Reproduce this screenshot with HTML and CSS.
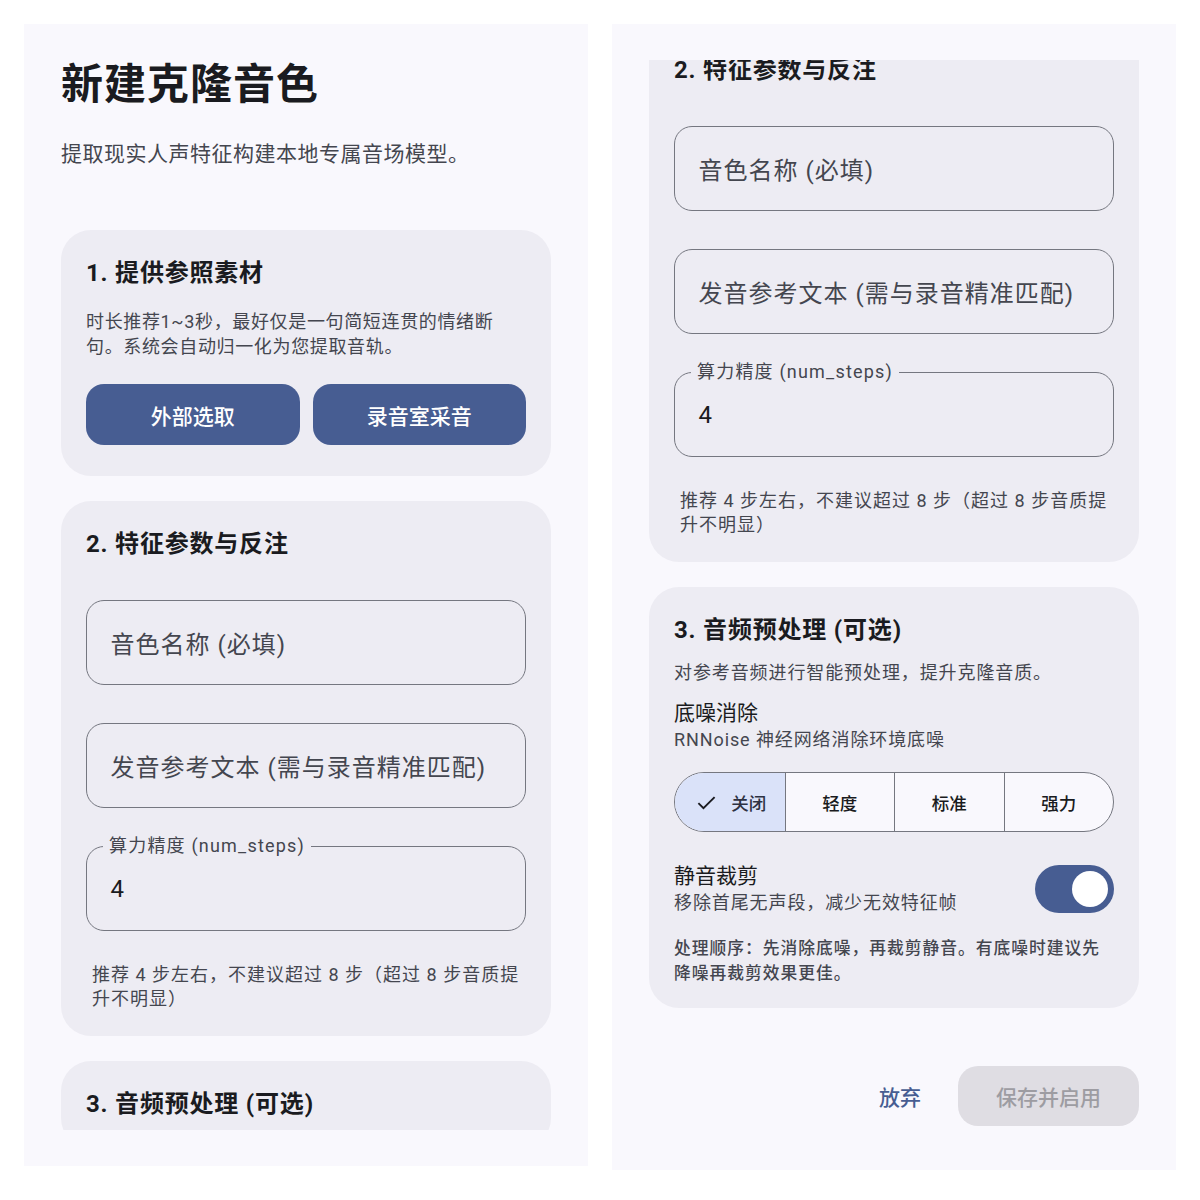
FILE: index.html
```html
<!DOCTYPE html>
<html lang="zh-CN">
<head>
<meta charset="utf-8">
<title>新建克隆音色</title>
<link rel="stylesheet" href="styles.css">
</head>
<body>
<div class="screens">
  <section class="panel panel-left">
    <div class="viewport viewport-left">
      <h1 class="headline">新建克隆音色</h1>
      <p class="subtitle">提取现实人声特征构建本地专属音场模型。</p>

      <div class="card card-source">
        <h2 class="card-title">1. 提供参照素材</h2>
        <p class="card-desc">时长推荐1~3秒，最好仅是一句简短连贯的情绪断句。系统会自动归一化为您提取音轨。</p>
        <div class="button-row">
          <button class="filled-btn">外部选取</button>
          <button class="filled-btn">录音室采音</button>
        </div>
      </div>

      <div class="card card-params">
        <h2 class="card-title">2. 特征参数与反注</h2>
        <div class="field field-first"><span class="placeholder">音色名称 (必填)</span></div>
        <div class="field"><span class="placeholder">发音参考文本 (需与录音精准匹配)</span></div>
        <div class="field field-labeled">
          <span class="float-label">算力精度 (num_steps)</span>
          <span class="value">4</span>
        </div>
        <p class="hint">推荐 4 步左右，不建议超过 8 步（超过 8 步音质提升不明显）</p>
      </div>

      <div class="card card-pre">
        <h2 class="card-title">3. 音频预处理 (可选)</h2>
      </div>
    </div>
  </section>

  <section class="panel panel-right">
    <div class="viewport viewport-right">
      <div class="card card-params card-scrolled">
        <h2 class="card-title">2. 特征参数与反注</h2>
        <div class="field field-first"><span class="placeholder">音色名称 (必填)</span></div>
        <div class="field"><span class="placeholder">发音参考文本 (需与录音精准匹配)</span></div>
        <div class="field field-labeled">
          <span class="float-label">算力精度 (num_steps)</span>
          <span class="value">4</span>
        </div>
        <p class="hint">推荐 4 步左右，不建议超过 8 步（超过 8 步音质提升不明显）</p>
      </div>

      <div class="card card-pre card-pre-full">
        <h2 class="card-title">3. 音频预处理 (可选)</h2>
        <p class="pre-desc">对参考音频进行智能预处理，提升克隆音质。</p>
        <div class="setting-text setting-noise">
          <div class="setting-title">底噪消除</div>
          <div class="setting-sub">RNNoise 神经网络消除环境底噪</div>
        </div>
        <div class="segmented">
          <div class="segment selected">
            <svg class="check" viewBox="0 0 24 24" width="27" height="27"><polyline points="4.8,12.6 9.3,17 19.2,7.2" fill="none" stroke="#1a1b20" stroke-width="1.7"/></svg>
            <span>关闭</span>
          </div>
          <div class="segment"><span>轻度</span></div>
          <div class="segment"><span>标准</span></div>
          <div class="segment"><span>强力</span></div>
        </div>
        <div class="setting-row">
          <div class="setting-text">
            <div class="setting-title">静音裁剪</div>
            <div class="setting-sub">移除首尾无声段，减少无效特征帧</div>
          </div>
          <div class="switch"><div class="thumb"></div></div>
        </div>
        <p class="note">处理顺序：先消除底噪，再裁剪静音。有底噪时建议先降噪再裁剪效果更佳。</p>
      </div>
    </div>
    <footer class="actions">
      <button class="text-btn">放弃</button>
      <button class="save-btn" disabled>保存并启用</button>
    </footer>
  </section>
</div>
</body>
</html>
```

FILE: styles.css
```css
* { box-sizing: border-box; }

body {
  margin: 0;
  background: #ffffff;
  font-family: Roboto, "Noto Sans CJK SC", sans-serif;
  color: #1a1b20;
}

.screens {
  display: flex;
  gap: 24px;
  padding: 24px;
  align-items: flex-start;
}

.panel {
  width: 564px;
  background: #f9f8fd;
}

.panel-left {
  padding: 0 37px 36px;
}

.viewport {
  overflow: hidden;
}

.viewport-left {
  height: 1106px;
  padding-top: 36px;
}

.panel-right {
  padding: 36px 37px 0;
}

.viewport-right {
  height: 982px;
}

.headline {
  margin: 0;
  font-size: 42px;
  line-height: 50px;
  font-weight: 700;
  letter-spacing: 1px;
  color: #1a1b20;
}

.subtitle {
  margin: 29px 0 0;
  font-size: 21px;
  line-height: 30px;
  letter-spacing: 0.5px;
  color: #44464f;
}

.card {
  background: #edecf3;
  border-radius: 30px;
  padding: 24px 25px 25px;
  margin-top: 25px;
}

.card-source {
  margin-top: 61px;
  padding-bottom: 31px;
}

.card-scrolled {
  margin-top: -33px;
}

.card-title {
  margin: 0;
  font-size: 24px;
  line-height: 38px;
  font-weight: 700;
  letter-spacing: 0.8px;
  color: #1a1b20;
}

.card-desc {
  margin: 17px 0 0;
  font-size: 18px;
  line-height: 25px;
  letter-spacing: 0.65px;
  color: #44464f;
}

.button-row {
  display: grid;
  grid-template-columns: 1fr 1fr;
  gap: 13px;
  margin-top: 25px;
}

.filled-btn {
  height: 61px;
  border: none;
  border-radius: 18px;
  background: #475d92;
  color: #ffffff;
  font-family: inherit;
  font-size: 21px;
  font-weight: 500;
}

.field {
  position: relative;
  height: 85px;
  margin-top: 38px;
  border: 1.5px solid #757780;
  border-radius: 18px;
  padding-left: 23.5px;
  display: flex;
  align-items: center;
}

.field-first {
  margin-top: 37px;
}

.placeholder {
  font-size: 24px;
  letter-spacing: 1px;
  color: #44464f;
}

.value {
  font-size: 24px;
  color: #1a1b20;
}

.float-label {
  position: absolute;
  top: -12px;
  left: 16px;
  padding: 0 6px;
  background: #edecf3;
  font-size: 18px;
  line-height: 22px;
  letter-spacing: 1.2px;
  color: #44464f;
}

.hint {
  margin: 32px 0 0;
  padding: 0 6px;
  font-size: 18px;
  line-height: 24px;
  letter-spacing: 1px;
  color: #44464f;
}

.card-pre-full {
  padding-bottom: 22px;
}

.pre-desc {
  margin: 11px 0 0;
  font-size: 18px;
  line-height: 26px;
  letter-spacing: 0.9px;
  color: #44464f;
}

.setting-noise {
  margin-top: 13px;
}

.setting-title {
  font-size: 21px;
  line-height: 28px;
  color: #1a1b20;
}

.setting-sub {
  margin-top: 1px;
  font-size: 18px;
  line-height: 24px;
  letter-spacing: 0.9px;
  color: #44464f;
}

.segmented {
  display: grid;
  grid-template-columns: repeat(4, 1fr);
  height: 60px;
  margin-top: 20px;
  border: 1.5px solid #757780;
  border-radius: 30px;
  overflow: hidden;
  background: #f9f8fd;
}

.segment {
  display: flex;
  align-items: center;
  justify-content: center;
  gap: 11px;
  font-size: 17.5px;
  font-weight: 500;
  color: #1a1b20;
}

.segment + .segment {
  border-left: 1.5px solid #757780;
}

.segment.selected {
  background: #dae2f9;
  color: #2d3142;
}

.check {
  display: block;
}

.setting-row {
  display: flex;
  align-items: center;
  justify-content: space-between;
  margin-top: 30px;
}

.switch {
  width: 79px;
  height: 48px;
  border-radius: 24px;
  background: #475d92;
  display: flex;
  align-items: center;
  justify-content: flex-end;
  padding: 0 6px;
}

.thumb {
  width: 36px;
  height: 36px;
  border-radius: 50%;
  background: #ffffff;
}

.note {
  margin: 21px 0 0;
  font-size: 16.75px;
  line-height: 25px;
  letter-spacing: 1px;
  font-weight: 500;
  color: #44464f;
}

.actions {
  display: flex;
  justify-content: flex-end;
  align-items: center;
  gap: 19px;
  padding: 24px 0 44px;
}

.text-btn {
  border: none;
  background: none;
  padding: 0 18px;
  height: 60px;
  font-family: inherit;
  font-size: 21px;
  font-weight: 500;
  color: #475d92;
}

.save-btn {
  height: 60px;
  width: 181px;
  border: none;
  border-radius: 20px;
  background: #dfdde3;
  color: #9d9ca2;
  font-family: inherit;
  font-size: 21px;
  font-weight: 500;
}
```
